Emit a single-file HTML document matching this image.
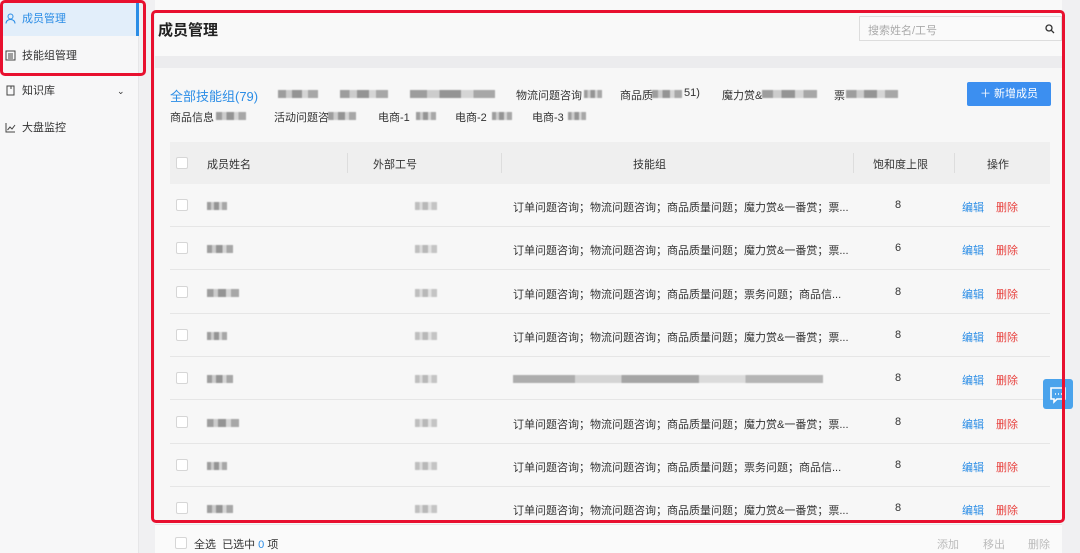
<!DOCTYPE html>
<html><head><meta charset="utf-8"><style>
*{margin:0;padding:0;box-sizing:border-box}
body{width:1080px;height:553px;overflow:hidden;background:#f0f0f2;font-family:"Liberation Sans","Noto Sans CJK SC",sans-serif;font-size:11px;color:#333;position:relative}
.side{position:absolute;left:0;top:0;width:139px;height:553px;background:#f7f7f8;border-right:1px solid #e6e6e8}
.si{position:absolute;left:0;width:139px;height:34px;line-height:34px;padding-left:22px;font-size:11px;color:#333}
.si svg{position:absolute;left:5px;top:11px}
.act{background:#e2eefa;color:#2b8de6;border-right:3px solid #2b8de6}
.main{position:absolute;left:155px;top:0;width:907px;height:553px;background:#f7f7f7}
.hdr{position:absolute;left:0;top:0;width:907px;height:56px;background:#f9f9f9}
.band{position:absolute;left:0;top:56px;width:907px;height:12px;background:#ececee}
.t{position:absolute;white-space:nowrap}
.red{position:absolute;border:3px solid #e8102f;border-radius:5px}
.th{position:absolute;left:170px;top:142px;width:880px;height:42px;background:#efefef}
.row{position:absolute;left:170px;width:880px;height:43px;border-bottom:1px solid #e6e6e6}
.cb{position:absolute;width:12px;height:12px;border:1px solid #d6d6d6;border-radius:2px;background:#fff}
.blur{position:absolute;height:8px;background:linear-gradient(90deg,#555 0 20%,#aaa 20% 35%,#444 35% 60%,#bbb 60% 75%,#666 75%);opacity:.55;filter:blur(.6px)}
</style></head><body>
<div class="side">
 <div class="si act" style="top:2px"><svg width="11" height="11" viewBox="0 0 11 11" fill="none" stroke="#2b8de6"><circle cx="5.5" cy="3.5" r="2.5"/><path d="M1 10.5c0-2.5 2-4 4.5-4s4.5 1.5 4.5 4"/></svg>成员管理</div>
 <div class="si" style="top:39px"><svg width="11" height="11" viewBox="0 0 11 11" fill="none" stroke="#444"><rect x="1" y="1" width="9" height="9"/><path d="M3 4h5M3 6h5M3 8h5"/></svg>技能组管理</div>
 <div class="si" style="top:74px"><svg width="11" height="11" viewBox="0 0 11 11" fill="none" stroke="#444"><path d="M2 1h7v9H2zM6 1v3"/></svg>知识库<span style="position:absolute;left:117px;font-size:9px">⌄</span></div>
 <div class="si" style="top:111px"><svg width="11" height="11" viewBox="0 0 11 11" fill="none" stroke="#444"><path d="M1 1v9h9M2.5 8l2.5-3 2 2 3-4"/></svg>大盘监控</div>
</div>
<div class="main">
 <div class="hdr"></div><div class="band"></div>
 <div class="t" style="left:3px;top:19px;font-size:15px;font-weight:bold;color:#222">成员管理</div>
 <div style="position:absolute;left:704px;top:16px;width:203px;height:25px;border:1px solid #ddd;background:#fafafa"><span class="t" style="left:8px;top:5px;color:#aaa">搜索姓名/工号</span><svg style="position:absolute;right:6px;top:7px" width="10" height="10" viewBox="0 0 10 10" fill="none" stroke="#333" stroke-width="1.3"><circle cx="4" cy="4" r="3"/><path d="M6.3 6.3L9 9"/></svg></div>
</div>
<div class="t" style="left:170px;top:86px;font-size:13px;color:#2b8de6">全部技能组(79)</div>
<div class="blur" style="left:278px;top:90px;width:40px"></div>
<div class="blur" style="left:340px;top:90px;width:48px"></div>
<div class="blur" style="left:410px;top:90px;width:85px"></div>
<div class="t" style="left:516px;top:87px">物流问题咨询</div><div class="blur" style="left:584px;top:90px;width:18px"></div>
<div class="t" style="left:620px;top:87px">商品质</div><div class="blur" style="left:652px;top:90px;width:30px"></div><div class="t" style="left:684px;top:87px">51)</div>
<div class="t" style="left:722px;top:87px">魔力赏&amp;</div><div class="blur" style="left:762px;top:90px;width:55px"></div>
<div class="t" style="left:834px;top:87px">票</div><div class="blur" style="left:846px;top:90px;width:52px"></div>
<div class="t" style="left:170px;top:109px">商品信息</div><div class="blur" style="left:216px;top:112px;width:30px"></div>
<div class="t" style="left:274px;top:109px">活动问题咨</div><div class="blur" style="left:328px;top:112px;width:28px"></div>
<div class="t" style="left:378px;top:109px">电商-1</div><div class="blur" style="left:416px;top:112px;width:20px"></div>
<div class="t" style="left:455px;top:109px">电商-2</div><div class="blur" style="left:492px;top:112px;width:20px"></div>
<div class="t" style="left:532px;top:109px">电商-3</div><div class="blur" style="left:568px;top:112px;width:18px"></div>
<div style="position:absolute;left:967px;top:82px;width:84px;height:24px;background:#3c8ff0;border-radius:2px;color:#fff;line-height:24px;text-align:center;font-size:11px">＋ 新增成员</div>
<div class="th"><div class="cb" style="left:6px;top:15px"></div>
 <span class="t" style="left:37px;top:14px">成员姓名</span><span class="t" style="left:203px;top:14px">外部工号</span><span class="t" style="left:463px;top:14px">技能组</span><span class="t" style="left:703px;top:14px">饱和度上限</span><span class="t" style="left:817px;top:14px">操作</span>
 <div style="position:absolute;left:177px;top:11px;width:1px;height:20px;background:#ddd"></div><div style="position:absolute;left:331px;top:11px;width:1px;height:20px;background:#ddd"></div><div style="position:absolute;left:683px;top:11px;width:1px;height:20px;background:#ddd"></div><div style="position:absolute;left:784px;top:11px;width:1px;height:20px;background:#ddd"></div>
</div>
<div id="rows"></div>
<script>
var s=["订单问题咨询；物流问题咨询；商品质量问题；魔力赏&一番赏；票...","订单问题咨询；物流问题咨询；商品质量问题；魔力赏&一番赏；票...","订单问题咨询；物流问题咨询；商品质量问题；票务问题；商品信...","订单问题咨询；物流问题咨询；商品质量问题；魔力赏&一番赏；票...","","订单问题咨询；物流问题咨询；商品质量问题；魔力赏&一番赏；票...","订单问题咨询；物流问题咨询；商品质量问题；票务问题；商品信...","订单问题咨询；物流问题咨询；商品质量问题；魔力赏&一番赏；票..."];
var n=[8,6,8,8,8,8,8,8],h="";
for(var i=0;i<8;i++){var y=184+i*43.3;
h+='<div class="row" style="top:'+y+'px"><div class="cb" style="left:6px;top:15px"></div><div class="blur" style="left:37px;top:18px;width:'+(20+i%3*6)+'px"></div><div class="blur" style="left:245px;top:18px;width:22px;opacity:.35"></div>'+(s[i]?'<span class="t" style="left:343px;top:15px">'+s[i]+'</span>':'<div class="blur" style="left:343px;top:18px;width:310px;opacity:.45"></div>')+'<span class="t" style="left:725px;top:15px">'+n[i]+'</span><span class="t" style="left:792px;top:15px;color:#2b8de6">编辑</span><span class="t" style="left:826px;top:15px;color:#e8423f">删除</span></div>';}
document.getElementById('rows').innerHTML=h;
</script>
<div style="position:absolute;left:155px;top:524px;width:907px;height:29px;background:#fafafa;border-top:1px solid #e6e6e6"></div>
<div class="cb" style="left:175px;top:537px"></div>
<div class="t" style="left:194px;top:536px">全选 &nbsp;已选中 <span style="color:#2b8de6">0</span> 项</div>
<div class="t" style="left:937px;top:536px;color:#bbb">添加</div><div class="t" style="left:983px;top:536px;color:#bbb">移出</div><div class="t" style="left:1028px;top:536px;color:#bbb">删除</div>
<div style="position:absolute;left:1043px;top:379px;width:30px;height:30px;background:#4aa3ec;border-radius:3px"><svg width="30" height="30" viewBox="0 0 30 30" fill="none" stroke="#fff" stroke-width="1.6"><path d="M8 9h14v11h-8l-3 3v-3H8z"/><path d="M12 15h1M15 15h1M18 15h1"/></svg></div>
<div class="red" style="left:0;top:0;width:146px;height:76px"></div>
<div class="red" style="left:151px;top:10px;width:914px;height:513px"></div>
</body></html>
